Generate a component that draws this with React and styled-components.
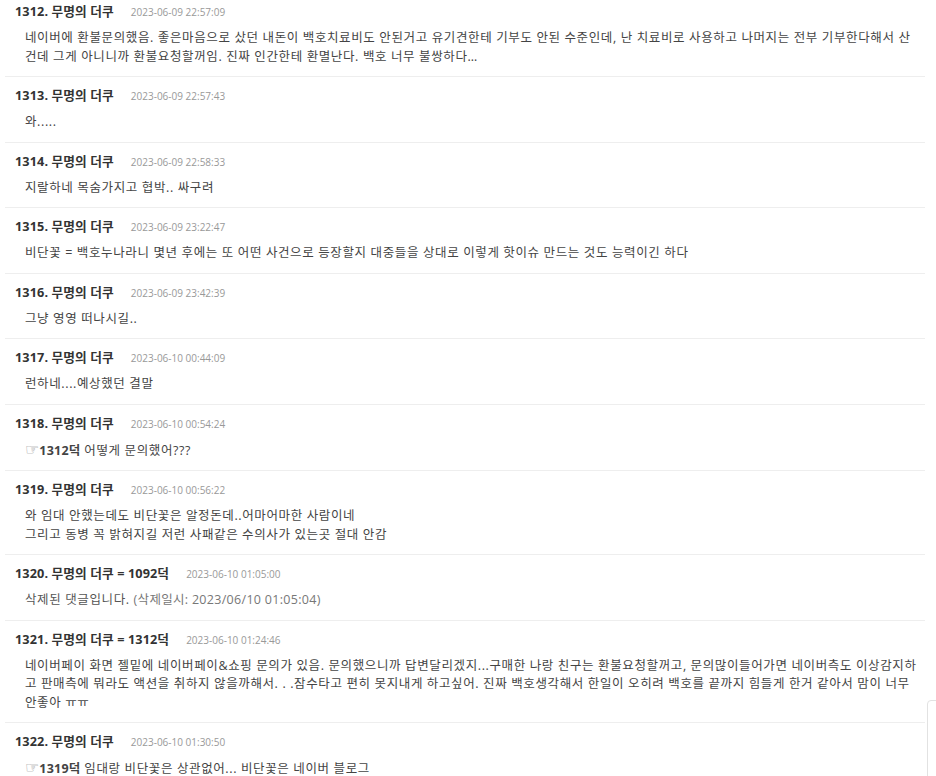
import React from "react";
import styled, { createGlobalStyle } from "styled-components";

const Global = createGlobalStyle`
  html, body { margin: 0; padding: 0; background: #fff; }
  body {
    font-family: "Open Sans", "Noto Sans CJK KR", "DejaVu Sans", sans-serif;
    overflow: hidden;
  }
`;

const Page = styled.div`
  width: 936px;
  height: 776px;
  overflow: hidden;
  position: relative;
`;

const List = styled.ul`
  list-style: none;
  margin: -7px 0 0 5px;
  padding: 0;
  width: 920px;
`;

const Item = styled.li`
  padding: 9px 10px 10px;
  border-bottom: 1px solid #eeeeee;
`;

const Header = styled.div`
  display: flex;
  align-items: baseline;
  gap: 17px;
  height: 18px;
  line-height: 18px;
`;

const Author = styled.span`
  font-size: 12.7px;
  font-weight: 700;
  color: #333;
  letter-spacing: 0.1px;
`;

const Date = styled.span`
  font-size: 10px;
  color: #999;
`;

const Body = styled.div`
  margin-top: 9px;
  padding-left: 10px;
  font-size: 12.5px;
  line-height: 18.5px;
  color: #444;
  letter-spacing: 0.62px;
  white-space: nowrap;
`;

const Strong = styled.b`
  font-weight: 700;
  color: #444;
  letter-spacing: 0.2px;
`;

const Hand = styled.span`
  font-family: "DejaVu Sans", sans-serif;
  font-size: 16px;
  color: #888;
  letter-spacing: 0;
`;

const Deleted = styled.span`
  color: #555;
`;

const Meta = styled.span`
  color: #777;
  letter-spacing: 0.3px;
`;

const Widget = styled.div`
  position: absolute;
  left: 927px;
  top: 700px;
  width: 30px;
  height: 100px;
  border: 1px solid #e2e2e2;
  border-radius: 4px;
  background: #fff;
`;

const Reply = ({ to, children }) => (
  <>
    <Hand>☞</Hand>
    <Strong>{to}덕</Strong> {children}
  </>
);

const comments = [
  {
    no: 1312,
    date: "2023-06-09 22:57:09",
    lines: [
      "네이버에 환불문의했음. 좋은마음으로 샀던 내돈이 백호치료비도 안된거고 유기견한테 기부도 안된 수준인데, 난 치료비로 사용하고 나머지는 전부 기부한다해서 산",
      "건데 그게 아니니까 환불요청할꺼임. 진짜 인간한테 환멸난다. 백호 너무 불쌍하다…",
    ],
  },
  { no: 1313, date: "2023-06-09 22:57:43", lines: ["와....."] },
  { no: 1314, date: "2023-06-09 22:58:33", lines: ["지랄하네 목숨가지고 협박.. 싸구려"] },
  {
    no: 1315,
    date: "2023-06-09 23:22:47",
    lines: [
      "비단꽃 = 백호누나라니 몇년 후에는 또 어떤 사건으로 등장할지 대중들을 상대로 이렇게 핫이슈 만드는 것도 능력이긴 하다",
    ],
  },
  { no: 1316, date: "2023-06-09 23:42:39", lines: ["그냥 영영 떠나시길.."] },
  { no: 1317, date: "2023-06-10 00:44:09", lines: ["런하네....예상했던 결말"] },
  {
    no: 1318,
    date: "2023-06-10 00:54:24",
    lines: [<Reply to="1312">어떻게 문의했어???</Reply>],
  },
  {
    no: 1319,
    date: "2023-06-10 00:56:22",
    lines: [
      "와 임대 안했는데도 비단꽃은 알정돈데..어마어마한 사람이네",
      "그리고 동병 꼭 밝혀지길 저런 사패같은 수의사가 있는곳 절대 안감",
    ],
  },
  {
    no: 1320,
    target: "1092",
    date: "2023-06-10 01:05:00",
    lines: [
      <Deleted>
        삭제된 댓글입니다. <Meta>(삭제일시: 2023/06/10 01:05:04)</Meta>
      </Deleted>,
    ],
  },
  {
    no: 1321,
    target: "1312",
    date: "2023-06-10 01:24:46",
    lines: [
      "네이버페이 화면 젤밑에 네이버페이&쇼핑 문의가 있음. 문의했으니까 답변달리겠지...구매한 나랑 친구는 환불요청할꺼고, 문의많이들어가면 네이버측도 이상감지하",
      "고 판매측에 뭐라도 액션을 취하지 않을까해서. . .잠수타고 편히 못지내게 하고싶어. 진짜 백호생각해서 한일이 오히려 백호를 끝까지 힘들게 한거 같아서 맘이 너무",
      "안좋아 ㅠㅠ",
    ],
  },
  {
    no: 1322,
    date: "2023-06-10 01:30:50",
    lines: [<Reply to="1319">임대랑 비단꽃은 상관없어... 비단꽃은 네이버 블로그</Reply>],
  },
];

export default function App() {
  return (
    <Page>
      <Global />
      <List>
        {comments.map((c) => (
          <Item key={c.no}>
            <Header>
              <Author>
                {c.no}. 무명의 더쿠{c.target ? ` = ${c.target}덕` : ""}
              </Author>
              <Date>{c.date}</Date>
            </Header>
            <Body>
              {c.lines.map((l, i) => (
                <React.Fragment key={i}>
                  {i > 0 && <br />}
                  {l}
                </React.Fragment>
              ))}
            </Body>
          </Item>
        ))}
      </List>
      <Widget />
    </Page>
  );
}
